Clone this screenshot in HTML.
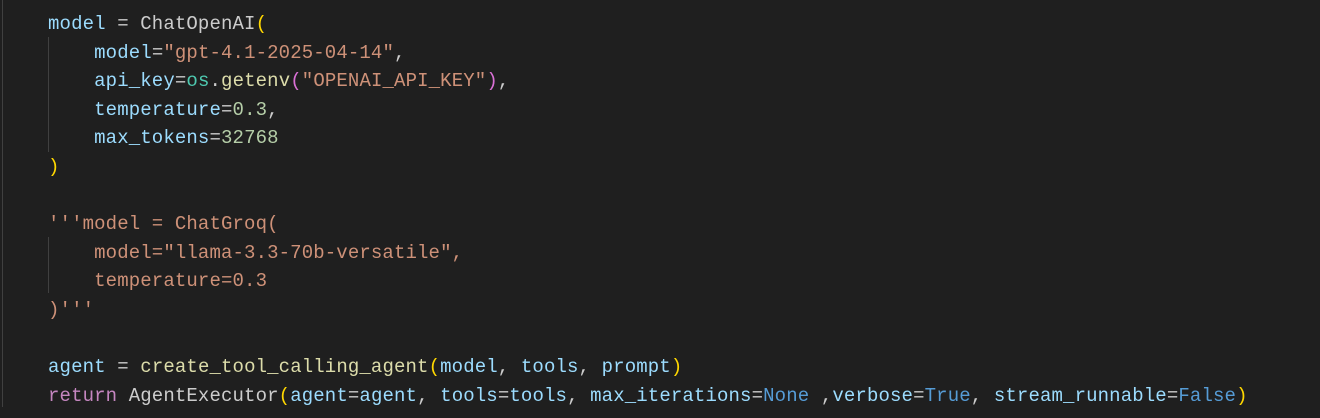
<!DOCTYPE html>
<html><head><meta charset="utf-8"><style>
html,body{margin:0;padding:0;background:#1f1f1f;width:1320px;height:418px;overflow:hidden}
.code{position:absolute;left:48px;top:10px;font-family:"Liberation Mono",monospace;font-size:19px;letter-spacing:0.13px;line-height:28.6px;color:#cccccc;white-space:pre}
.v{color:#9cdcfe}.s{color:#ce9178}.n{color:#b5cea8}.f{color:#dcdcaa}.c{color:#4ec9b0}.k{color:#569cd6}.r{color:#c586c0}.y{color:#ffd700}.p{color:#da70d6}
.g{position:absolute;width:1px;background:#404040}
</style></head><body>
<div class="g" style="left:2px;top:0;height:407px"></div>
<div class="g" style="left:48px;top:37px;height:115px"></div>
<div class="g" style="left:48px;top:237px;height:56px"></div>
<div class="code"><span class="v">model</span> = ChatOpenAI<span class="y">(</span>
    <span class="v">model</span>=<span class="s">"gpt-4.1-2025-04-14"</span>,
    <span class="v">api_key</span>=<span class="c">os</span>.<span class="f">getenv</span><span class="p">(</span><span class="s">"OPENAI_API_KEY"</span><span class="p">)</span>,
    <span class="v">temperature</span>=<span class="n">0.3</span>,
    <span class="v">max_tokens</span>=<span class="n">32768</span>
<span class="y">)</span>

<span class="s">'''model = ChatGroq(
    model="llama-3.3-70b-versatile",
    temperature=0.3
)'''</span>

<span class="v">agent</span> = <span class="f">create_tool_calling_agent</span><span class="y">(</span><span class="v">model</span>, <span class="v">tools</span>, <span class="v">prompt</span><span class="y">)</span>
<span class="r">return</span> AgentExecutor<span class="y">(</span><span class="v">agent</span>=<span class="v">agent</span>, <span class="v">tools</span>=<span class="v">tools</span>, <span class="v">max_iterations</span>=<span class="k">None</span> ,<span class="v">verbose</span>=<span class="k">True</span>, <span class="v">stream_runnable</span>=<span class="k">False</span><span class="y">)</span></div>
</body></html>
